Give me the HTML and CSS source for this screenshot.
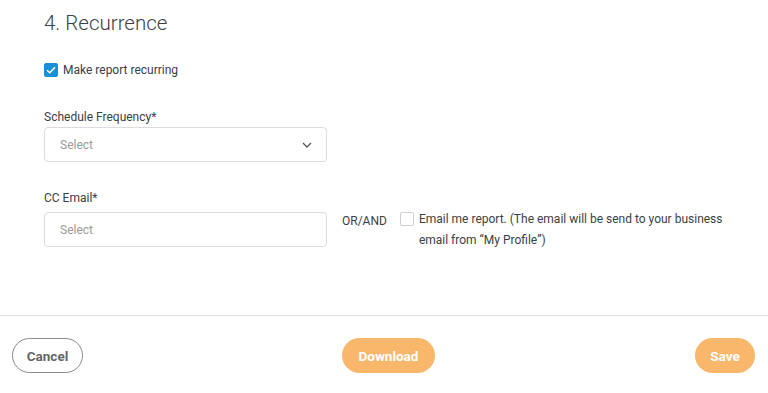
FILE: index.html
```html
<!DOCTYPE html>
<html>
<head>
<meta charset="utf-8">
<link rel="stylesheet" href="styles.css">
</head>
<body>
<div class="page">
  <section class="content">
    <h2 class="title">4. Recurrence</h2>
    <label class="check-row">
      <span class="box checked">
        <svg width="10" height="8" viewBox="0 0 10 8"><path d="M1 4.2 L3.8 6.8 L9 1.2" fill="none" stroke="#fff" stroke-width="1.4"/></svg>
      </span>
      <span class="check-text">Make report recurring</span>
    </label>

    <div class="field freq">
      <div class="label">Schedule Frequency*</div>
      <div class="input select">
        <span class="placeholder">Select</span>
        <svg class="chev" width="10" height="6" viewBox="0 0 10 6"><path d="M1 1 L5 5 L9 1" fill="none" stroke="#555" stroke-width="1.3"/></svg>
      </div>
    </div>

    <div class="field cc">
      <div class="label">CC Email*</div>
      <div class="cc-row">
        <div class="input"><span class="placeholder">Select</span></div>
        <span class="orand">OR/AND</span>
        <label class="email-me">
          <span class="box"></span>
          <span class="email-text">Email me report. (The email will be send to your business email from “My Profile”)</span>
        </label>
      </div>
    </div>
  </section>
  <footer class="footer">
    <button class="btn cancel">Cancel</button>
    <button class="btn primary download">Download</button>
    <button class="btn primary save">Save</button>
  </footer>
</div>
</body>
</html>
```

FILE: styles.css
```css
* { box-sizing: border-box; }
html, body { margin: 0; padding: 0; background: #fff; }
body { font-family: Roboto, "Noto Sans", sans-serif; color: #3a3f45; }
.page { width: 768px; height: 393px; display: flex; flex-direction: column; }
.content { padding: 0 0 0 44px; height: 316px; border-bottom: 1px solid #e2e2e2; }
.title { margin: 0; padding-top: 10px; font-weight: 300; font-size: 20.5px; line-height: 26px; color: #3b4046; }
.check-row { display: flex; align-items: center; margin-top: 27px; height: 14px; }
.box { width: 14px; height: 14px; border: 1px solid #cfcfcf; border-radius: 2px; display: inline-flex; align-items: center; justify-content: center; flex: none; background: #fff; }
.box.checked { background: #1b8fd6; border-color: #1b8fd6; }
.check-text { margin-left: 5px; font-size: 12px; color: #3b4046; }
.label { font-size: 12px; color: #3b4046; line-height: 16px; }
.freq { margin-top: 32px; }
.input { width: 283px; height: 35px; border: 1px solid #dcdcdc; border-radius: 4px; display: flex; align-items: center; padding: 0 15px; flex: none; }
.freq .input { margin-top: 2px; }
.cc .input { margin-top: 6px; }
.placeholder { font-size: 12px; color: #9a9a9a; }
.select { justify-content: space-between; padding-right: 14px; }
.chev { margin-top: 1px; }
.cc { margin-top: 28px; }
.cc-row { display: flex; align-items: flex-start; }
.orand { margin-left: 15px; margin-top: 7px; font-size: 12px; color: #3b4046; line-height: 16px; }
.email-me { display: flex; align-items: flex-start; margin-left: 13px; margin-top: 6px; }
.email-text { margin-left: 5px; font-size: 12px; line-height: 21px; margin-top: -3px; width: 305px; color: #3b4046; }
.footer { display: flex; align-items: center; padding: 22px 13px 0 12px; }
.btn { font-family: Roboto, sans-serif; font-weight: 700; font-size: 13.5px; height: 35px; border-radius: 18px; cursor: pointer; flex: none; }
.cancel { width: 71px; background: #fff; border: 1px solid #8a8a8a; color: #666; }
.primary { border: none; background: #f9b76b; color: #fff; }
.download { width: 93px; margin-left: 259px; }
.save { width: 60px; margin-left: auto; }
```
